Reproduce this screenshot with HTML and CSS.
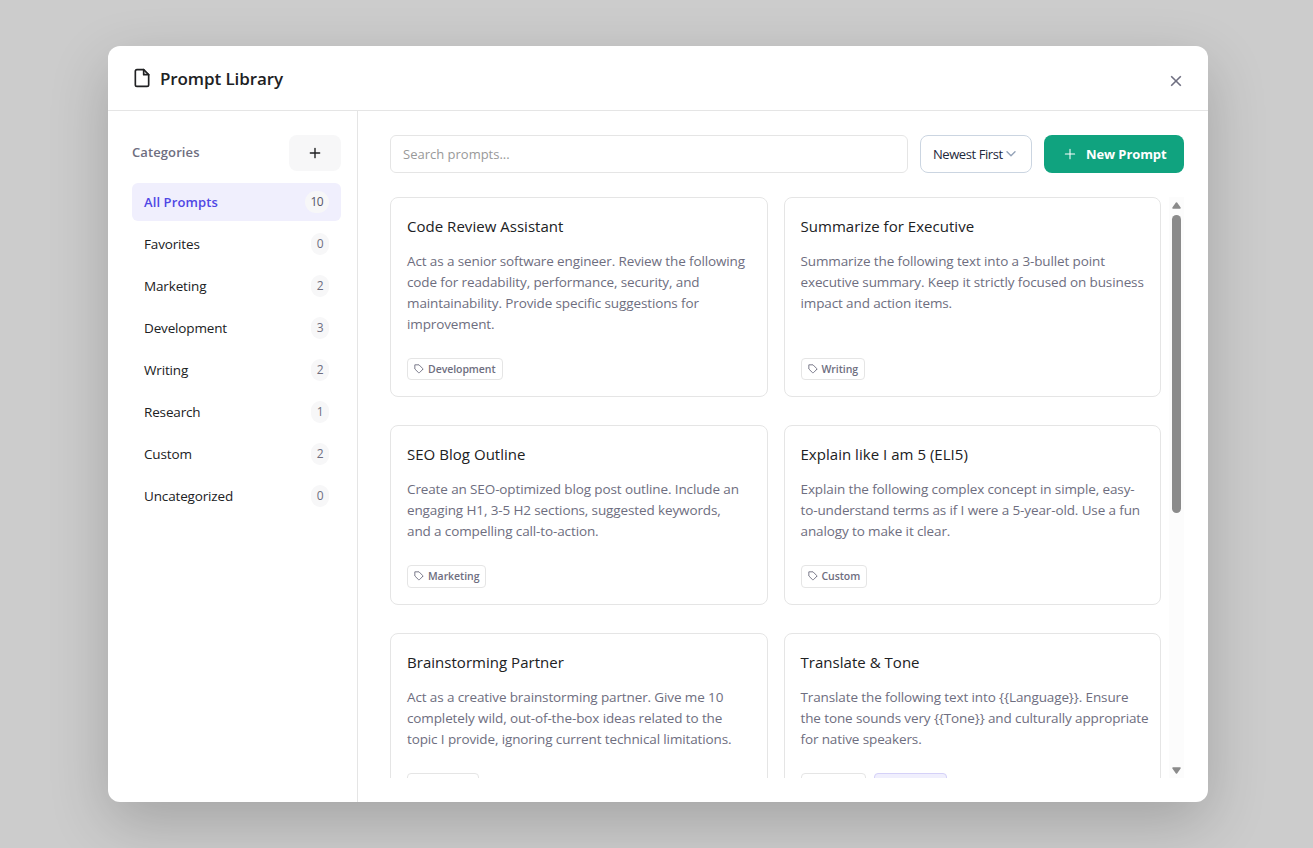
FILE: index.html
```html
<!DOCTYPE html>
<html lang="en">
<head>
<meta charset="UTF-8">
<meta name="viewport" content="width=device-width, initial-scale=1.0">
<title>Prompt Library</title>
<link rel="stylesheet" href="styles.css">
</head>
<body>
<svg class="sprite">
    <symbol id="tag" viewBox="0 0 24 24">
        <path d="M20.59 13.41l-7.17 7.17a2 2 0 0 1-2.83 0L2 12V2h10l8.59 8.59a2 2 0 0 1 0 2.82z"/>
    </symbol>
    <symbol id="plus" viewBox="0 0 24 24">
        <path d="M12 4v16M4 12h16"/>
    </symbol>
</svg>

<div class="modal">
    <header class="modal-header">
        <svg class="file-icon" viewBox="0 0 24 24"><path d="M14 2H6a2 2 0 0 0-2 2v16a2 2 0 0 0 2 2h12a2 2 0 0 0 2-2V8z"/><path d="M14 2v6h6"/></svg>
        <h2>Prompt Library</h2>
        <button class="close-btn" aria-label="Close"><svg viewBox="0 0 12 12"><path d="M1.2 1.2l9.6 9.6M10.8 1.2l-9.6 9.6"/></svg></button>
    </header>
    <div class="modal-body">
        <aside class="sidebar">
            <div class="sidebar-header">
                <h3>Categories</h3>
                <button class="add-btn" aria-label="Add category"><svg><use href="#plus"/></svg></button>
            </div>
            <ul class="categories">
                <li class="active"><span class="name">All Prompts</span><span class="count">10</span></li>
                <li><span class="name">Favorites</span><span class="count">0</span></li>
                <li><span class="name">Marketing</span><span class="count">2</span></li>
                <li><span class="name">Development</span><span class="count">3</span></li>
                <li><span class="name">Writing</span><span class="count">2</span></li>
                <li><span class="name">Research</span><span class="count">1</span></li>
                <li><span class="name">Custom</span><span class="count">2</span></li>
                <li><span class="name">Uncategorized</span><span class="count">0</span></li>
            </ul>
        </aside>
        <main class="content">
            <div class="toolbar">
                <input class="search" type="text" placeholder="Search prompts...">
                <button class="sort-btn"><span>Newest First</span><svg viewBox="0 0 10 6"><path d="M1 .8l4 4 4-4"/></svg></button>
                <button class="new-btn"><svg><use href="#plus"/></svg><span>New Prompt</span></button>
            </div>
            <div class="list">
                <div class="grid">
                    <div class="card">
                        <h4>Code Review Assistant</h4>
                        <p>Act as a senior software engineer. Review the following<br>code for readability, performance, security, and<br>maintainability. Provide specific suggestions for<br>improvement.</p>
                        <div class="tags"><span class="tag"><svg><use href="#tag"/></svg>Development</span></div>
                    </div>
                    <div class="card">
                        <h4>Summarize for Executive</h4>
                        <p>Summarize the following text into a 3-bullet point<br>executive summary. Keep it strictly focused on business<br>impact and action items.</p>
                        <div class="tags"><span class="tag"><svg><use href="#tag"/></svg>Writing</span></div>
                    </div>
                    <div class="card">
                        <h4>SEO Blog Outline</h4>
                        <p>Create an SEO-optimized blog post outline. Include an<br>engaging H1, 3-5 H2 sections, suggested keywords,<br>and a compelling call-to-action.</p>
                        <div class="tags"><span class="tag"><svg><use href="#tag"/></svg>Marketing</span></div>
                    </div>
                    <div class="card">
                        <h4>Explain like I am 5 (ELI5)</h4>
                        <p>Explain the following complex concept in simple, easy-<br>to-understand terms as if I were a 5-year-old. Use a fun<br>analogy to make it clear.</p>
                        <div class="tags"><span class="tag"><svg><use href="#tag"/></svg>Custom</span></div>
                    </div>
                    <div class="card">
                        <h4>Brainstorming Partner</h4>
                        <p>Act as a creative brainstorming partner. Give me 10<br>completely wild, out-of-the-box ideas related to the<br>topic I provide, ignoring current technical limitations.</p>
                        <div class="tags"><span class="tag"></span></div>
                    </div>
                    <div class="card">
                        <h4>Translate &amp; Tone</h4>
                        <p>Translate the following text into {{Language}}. Ensure<br>the tone sounds very {{Tone}} and culturally appropriate<br>for native speakers.</p>
                        <div class="tags"><span class="tag"></span><span class="tag vars"></span></div>
                    </div>
                </div>
                <div class="scrollbar">
                    <svg viewBox="0 0 9 7"><path d="M4.5 1L8 6H1z"/></svg>
                    <div class="thumb"></div>
                    <svg class="down" viewBox="0 0 9 7"><path d="M4.5 6L1 1h7z"/></svg>
                </div>
            </div>
        </main>
    </div>
</div>
</body>
</html>
```
FILE: styles.css
```css
* {
    box-sizing: border-box;
}
body {
    margin: 0;
    height: 848px;
    padding-top: 46px;
    overflow: hidden;
    background: #ccc;
    color: #202123;
    font-family: "Segoe UI", "Open Sans", "Noto Sans", sans-serif;
    font-size: 13px;
}
h2, h3, h4, p, ul {
    margin: 0;
    padding: 0;
}
button, input {
    font: inherit;
    color: inherit;
    padding: 0;
    border: 0;
    background: none;
}
svg {
    flex: none;
    fill: none;
    stroke: currentColor;
    stroke-width: 2;
    stroke-linecap: round;
    stroke-linejoin: round;
}
.sprite {
    display: none;
}
.modal {
    width: 1100px;
    height: 756px;
    margin-left: 108px;
    display: flex;
    flex-direction: column;
    background: #fff;
    border-radius: 12px;
    box-shadow: 0 20px 60px rgba(0,0,0,0.2);
    overflow: hidden;
}
.modal-header {
    height: 65px;
    flex: none;
    display: flex;
    align-items: center;
    padding: 0 24px;
    border-bottom: 1px solid #e5e5e5;
}
.file-icon {
    width: 20px;
    height: 20px;
    margin-right: 8px;
}
.modal-header h2 {
    flex: 1;
    font-size: 17px;
    font-weight: 600;
    letter-spacing: -0.1px;
}
.close-btn {
    width: 17px;
    height: 17px;
    display: flex;
    align-items: center;
    justify-content: center;
    margin-top: 6px;
    color: #6e6e80;
}
.close-btn svg {
    width: 12px;
    height: 12px;
    stroke-width: 1.6;
    stroke-linecap: butt;
}
.modal-body {
    flex: 1;
    min-height: 0;
    display: flex;
}

/* sidebar */
.sidebar {
    width: 250px;
    flex: none;
    padding: 24px 16px 24px 24px;
    border-right: 1px solid #e5e5e5;
}
.sidebar-header {
    display: flex;
    justify-content: space-between;
    height: 36px;
    margin-bottom: 12px;
}
.sidebar-header h3 {
    font-size: 13px;
    font-weight: 600;
    line-height: 35px;
    letter-spacing: 0.1px;
    color: #6e6e80;
}
.add-btn {
    width: 52px;
    height: 36px;
    display: flex;
    align-items: center;
    justify-content: center;
    background: #f7f7f8;
    border-radius: 8px;
}
.add-btn svg {
    width: 14px;
    height: 14px;
    stroke-width: 2.4;
}
.categories {
    display: flex;
    flex-direction: column;
    gap: 4px;
    list-style: none;
    font-size: 13.5px;
    letter-spacing: -0.15px;
}
.categories li {
    height: 38px;
    display: flex;
    align-items: center;
    justify-content: space-between;
    padding: 0 12px;
    border-radius: 6px;
}
.categories .active {
    background: #f0effd;
}
.active .name {
    color: #4f46e5;
    font-size: 13px;
    font-weight: 600;
    letter-spacing: 0.1px;
}
.count {
    height: 22px;
    line-height: 22px;
    padding: 0 6px 0 5.4px;
    border-radius: 11px;
    background: #f7f7f8;
    color: #6e6e80;
    font-size: 12px;
    letter-spacing: -0.6px;
}
.active .count {
    color: #565667;
}

/* main area */
.content {
    flex: 1;
    min-width: 0;
    display: flex;
    flex-direction: column;
    padding: 24px 24px 24px 32px;
}
.toolbar {
    display: flex;
    gap: 12px;
    margin-bottom: 24px;
}
.search {
    flex: 1;
    height: 38px;
    padding: 0 12px;
    border: 1px solid #e5e5e5;
    border-radius: 6px;
}
.search::placeholder {
    color: #999;
}
.sort-btn {
    width: 112px;
    height: 38px;
    display: flex;
    align-items: center;
    gap: 3px;
    padding: 0 12px;
    border: 1px solid #cbd5e1;
    border-radius: 8px;
    color: #1e293b;
    letter-spacing: -0.43px;
    white-space: nowrap;
}
.sort-btn svg {
    width: 10px;
    height: 6px;
    color: #94a3b8;
    stroke-width: 1.4;
}
.new-btn {
    width: 140px;
    height: 38px;
    display: flex;
    align-items: center;
    gap: 9px;
    padding-left: 19px;
    background: #10a37f;
    border-radius: 8px;
    color: #fff;
    font-weight: 700;
    letter-spacing: -0.1px;
}
.new-btn svg {
    width: 14px;
    height: 14px;
    stroke-width: 1.8;
}
.list {
    flex: 1;
    min-height: 0;
    display: flex;
    justify-content: space-between;
    overflow: hidden;
}
.grid {
    width: 771px;
    display: grid;
    grid-template-columns: repeat(2, minmax(0, 1fr));
    grid-auto-rows: max-content;
    gap: 28px 16px;
}
.card {
    min-height: 179.8px;
    display: flex;
    flex-direction: column;
    padding: 16px;
    border: 1px solid #e5e5e5;
    border-radius: 8px;
}
.card h4 {
    font-size: 15px;
    font-weight: 400;
    line-height: 24px;
    letter-spacing: 0.03px;
    margin-bottom: 13px;
    white-space: nowrap;
}
.card p {
    color: #6e6e80;
    font-size: 13.5px;
    line-height: 21px;
    letter-spacing: -0.12px;
    margin-bottom: 22.5px;
    white-space: nowrap;
}
.tags {
    display: flex;
    gap: 8px;
    margin-top: auto;
}
.tag {
    height: 22.3px;
    display: flex;
    align-items: center;
    gap: 4px;
    padding: 0 6px;
    border: 1px solid #e5e5e5;
    border-radius: 4px;
    color: #6e6e80;
    font-size: 10.5px;
    font-weight: 600;
    letter-spacing: -0.06px;
}
.tag svg {
    width: 10px;
    height: 10px;
    stroke-width: 2.2;
}
.tag:empty {
    width: 72px;
}
.tag:empty:not(:last-child) {
    width: 65px;
}
.tag.vars {
    width: 73px;
    background: #f0effd;
    border-color: #d5d1f8;
}
.scrollbar {
    width: 15px;
    display: flex;
    flex-direction: column;
    align-items: center;
    padding: 5px 0 4px;
    background: #fcfcfc;
}
.scrollbar svg {
    width: 9px;
    height: 7px;
    fill: #8b8b8b;
    stroke: #8b8b8b;
    stroke-width: 1.5;
}
.thumb {
    width: 9px;
    height: 298px;
    margin-top: 6px;
    border-radius: 5px;
    background: #8b8b8b;
}
.scrollbar .down {
    margin-top: auto;
}
```
